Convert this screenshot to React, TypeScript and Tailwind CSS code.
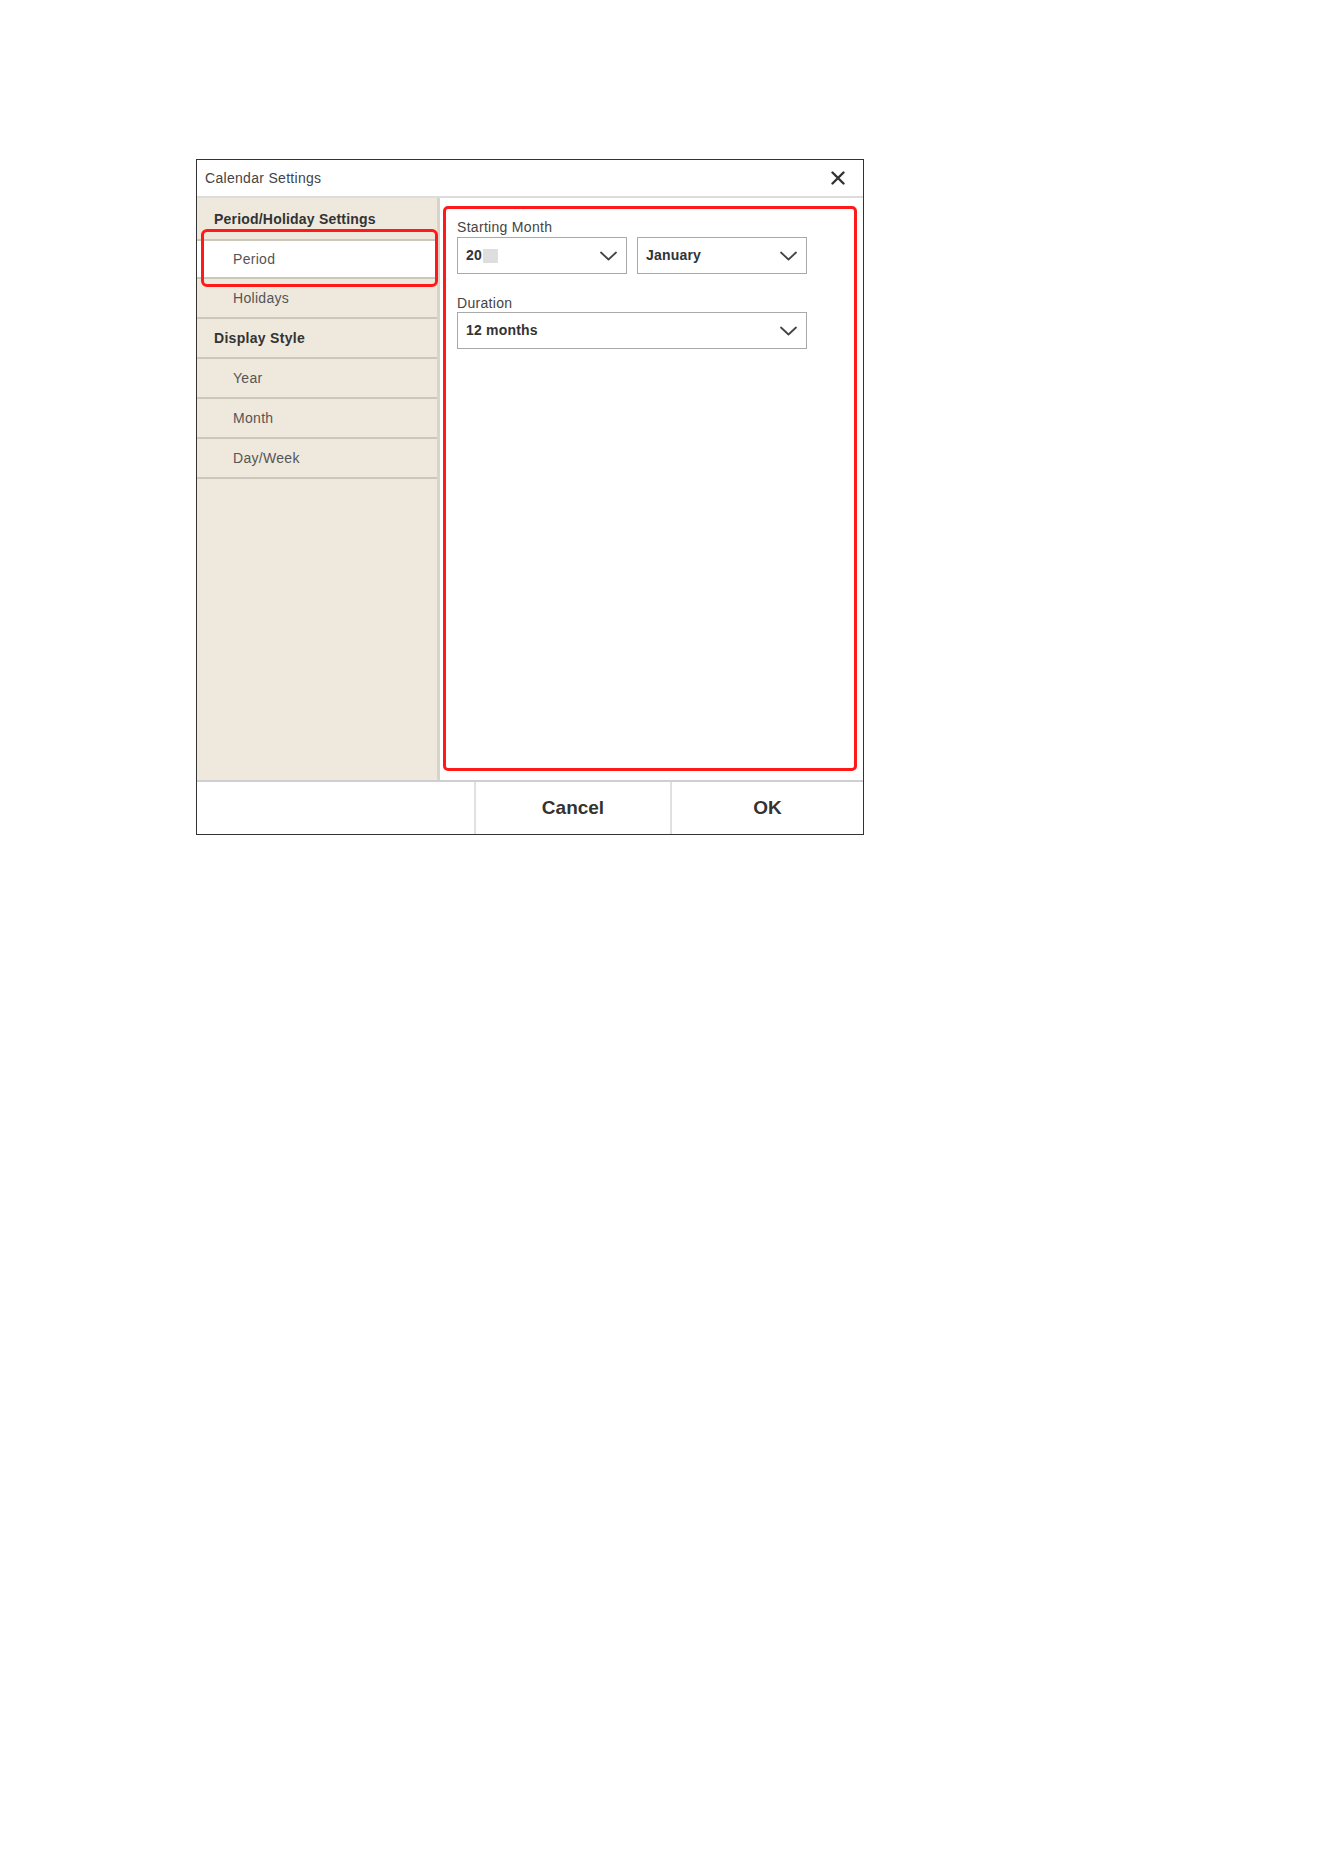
import React from 'react';

const ChevronDown: React.FC = () => (
  <svg width="17" height="10" viewBox="0 0 17 10" fill="none" className="shrink-0">
    <path d="M1 1.5 L8.5 8.5 L16 1.5" stroke="#444" strokeWidth="1.8" strokeLinecap="round" strokeLinejoin="round" />
  </svg>
);

const Select: React.FC<{ width: string; children: React.ReactNode }> = ({ width, children }) => (
  <div className={`${width} h-[37px] border border-[#a9a9a9] bg-white flex items-center justify-between pl-[8px] pr-[9px]`}>
    <div className="flex items-center text-[14px] font-bold tracking-[0.2px] text-[#333]">{children}</div>
    <ChevronDown />
  </div>
);

const NavRow: React.FC<{ label: string; header?: boolean }> = ({ label, header }) => (
  <div
    className={`h-[40px] flex items-center border-b-2 border-[#cdc6bb] text-[14px] tracking-[0.3px] ${
      header ? 'pl-[17px] font-bold text-[#333]' : 'pl-[36px] text-[#555]'
    }`}
  >
    {label}
  </div>
);

export default function App() {
  return (
    <div className="w-[1324px] h-[1872px] bg-white pt-[159px] pl-[196px]" style={{ fontFamily: '"Liberation Sans", Arial, sans-serif' }}>
      <div className="w-[668px] h-[676px] border border-[#333] flex flex-col bg-white">
        {/* title bar */}
        <div className="h-[38px] flex items-center justify-between pl-[8px] pr-[18px] border-b-2 border-[#dcdcdc] shrink-0">
          <span className="text-[14px] tracking-[0.3px] text-[#444]">Calendar Settings</span>
          <svg width="14" height="14" viewBox="0 0 14 14">
            <path d="M1.5 1.5 L12.5 12.5 M12.5 1.5 L1.5 12.5" stroke="#333" strokeWidth="2.4" strokeLinecap="round" />
          </svg>
        </div>

        <div className="flex-1 flex min-h-0">
          {/* sidebar */}
          <div className="relative w-[243px] bg-[#efe8dc] border-r-[3px] border-[#d8d3cb] shrink-0">
            <div className="h-[41px] flex items-center pl-[17px] pt-[1px] text-[14px] font-bold tracking-[0.2px] text-[#333]">
              Period/Holiday Settings
            </div>
            <div className="h-[40px] flex items-center bg-white border-y-2 border-[#cdc6bb] pl-[36px] text-[14px] tracking-[0.3px] text-[#555]">
              Period
            </div>
            <NavRow label="Holidays" />
            <NavRow label="Display Style" header />
            <NavRow label="Year" />
            <NavRow label="Month" />
            <NavRow label="Day/Week" />
            <div className="absolute left-[4px] top-[31px] w-[237px] h-[58px] border-[3px] border-[#ff1a1a] rounded-[6px]" />
          </div>

          {/* content */}
          <div className="flex-1 bg-white pt-[8px] pl-[3px] pr-[6px] pb-[9px] flex">
            <div className="flex-1 border-[3px] border-[#ff1a1a] rounded-[5px] pl-[11px] pt-[10px]">
              <div className="text-[14px] tracking-[0.3px] text-[#444] leading-[16px] mb-[2px]">Starting Month</div>
              <div className="flex gap-[10px]">
                <Select width="w-[170px]">
                  20
                  <span className="inline-block w-[15px] h-[14px] bg-[#dedede] ml-[1px]" />
                </Select>
                <Select width="w-[170px]">January</Select>
              </div>
              <div className="text-[14px] tracking-[0.3px] text-[#444] leading-[16px] mt-[21px] mb-[1px]">Duration</div>
              <Select width="w-[350px]">12 months</Select>
            </div>
          </div>
        </div>

        {/* footer */}
        <div className="h-[54px] border-t-2 border-[#cfcfcf] flex shrink-0">
          <div className="w-[277px]" />
          <div className="w-[196px] border-l-2 border-[#e0e0e0] flex items-center justify-center text-[19px] font-bold text-[#333]">
            Cancel
          </div>
          <div className="flex-1 border-l-2 border-[#e0e0e0] flex items-center justify-center text-[19px] font-bold text-[#333]">
            OK
          </div>
        </div>
      </div>
    </div>
  );
}
